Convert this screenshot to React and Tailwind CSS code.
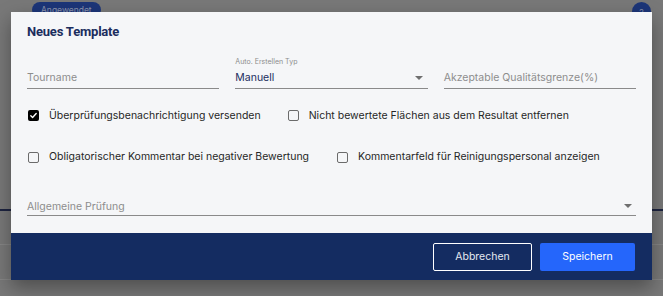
import { useState } from 'react';

function Checkbox({ checked }) {
  return (
    <span
      className={`w-[11px] h-[11px] rounded-[2px] flex items-center justify-center shrink-0 ${
        checked ? 'bg-black' : 'border border-[#6b6b6b] bg-transparent'
      }`}
    >
      {checked && (
        <svg width="9" height="9" viewBox="0 0 10 10" fill="none">
          <path d="M2 5.2l2 2 4-4.4" stroke="#fff" strokeWidth="1.5" strokeLinecap="round" strokeLinejoin="round" />
        </svg>
      )}
    </span>
  );
}

function Caret() {
  return (
    <svg width="8" height="4" viewBox="0 0 8 4" className="shrink-0">
      <path d="M0 0h8L4 4z" fill="#6f6f6f" />
    </svg>
  );
}

function CheckRow({ label, checked }) {
  return (
    <label className="flex items-center gap-[10px] text-[10.5px] text-[#262626]">
      <Checkbox checked={checked} />
      <span>{label}</span>
    </label>
  );
}

export default function App() {
  const [checks] = useState({ notify: true, remove: false, comment: false, cleaner: false });

  return (
    <div className="relative h-[296px] w-full overflow-hidden bg-[#787878] font-['Inter',sans-serif]">
      {/* page behind the overlay */}
      <div className="flex flex-col">
        <div className="flex items-start justify-between px-[32px] pt-[2px] pr-[12px]">
          <span className="rounded-full bg-[#1c3578] px-[9px] h-[16px] text-[8.5px] leading-[16px] text-[#8a93ad]">Angewendet</span>
          <span className="w-[19px] h-[19px] rounded-full bg-[#1c3578] text-[8px] text-[#8a93ad] flex items-center justify-center">2</span>
        </div>
        <div className="mt-[188px] h-[2px] bg-[#1d2440]" />
        <div className="mt-[33px] h-px bg-[#858585]" />
        <div className="mt-[34px] h-px bg-[#858585]" />
      </div>

      {/* dialog */}
      <div className="absolute left-[11px] top-[12px] w-[641px] flex flex-col shadow-[0_8px_18px_rgba(0,0,0,0.35)]">
        <div className="bg-[#f5f6f8] px-[16px] pt-[10px] h-[221px]">
          <h2 className="text-[13px] font-bold text-[#1b2d5e] tracking-[-0.2px] font-['Roboto',sans-serif]">Neues Template</h2>

          <div className="mt-[17px] grid grid-cols-3 gap-x-[16px]">
            <div className="flex flex-col justify-end h-[30px] border-b border-[#8a8a8a]">
              <span className="pb-[2px] text-[10.5px] text-[#8d8d8d]">Tourname</span>
            </div>
            <div className="flex flex-col justify-end h-[30px] border-b border-[#8a8a8a]">
              <span className="text-[7px] text-[#8d8d8d] leading-[9px] mb-[4px]">Auto. Erstellen Typ</span>
              <div className="flex items-center justify-between pb-[2px] pr-[5px]">
                <span className="text-[10.5px] text-[#1b2d5e]">Manuell</span>
                <Caret />
              </div>
            </div>
            <div className="flex flex-col justify-end h-[30px] border-b border-[#8a8a8a]">
              <span className="pb-[2px] text-[10.5px] text-[#8d8d8d]">Akzeptable Qualitätsgrenze(%)</span>
            </div>
          </div>

          <div className="mt-[19px] flex items-center gap-[27px] pl-px">
            <CheckRow checked={checks.notify} label="Überprüfungsbenachrichtigung versenden" />
            <CheckRow checked={checks.remove} label="Nicht bewertete Flächen aus dem Resultat entfernen" />
          </div>
          <div className="mt-[26px] flex items-center gap-[28px] pl-px">
            <CheckRow checked={checks.comment} label="Obligatorischer Kommentar bei negativer Bewertung" />
            <CheckRow checked={checks.cleaner} label="Kommentarfeld für Reinigungspersonal anzeigen" />
          </div>

          <div className="mt-[31px] flex items-end justify-between h-[20px] border-b border-[#8a8a8a] pr-[4px]">
            <span className="pb-0 text-[10.5px] text-[#8d8d8d]">Allgemeine Prüfung</span>
            <span className="pb-[7px]"><Caret /></span>
          </div>
        </div>

        <div className="bg-[#142c61] h-[47px] flex items-center justify-end gap-[8px] px-[17px]">
          <button className="w-[99px] h-[28px] rounded-[2px] border border-white text-[10.5px] text-[#e6e9f0]">Abbrechen</button>
          <button className="w-[95px] h-[28px] rounded-[2px] bg-[#2566fb] text-[10.5px] text-white">Speichern</button>
        </div>
      </div>
    </div>
  );
}
